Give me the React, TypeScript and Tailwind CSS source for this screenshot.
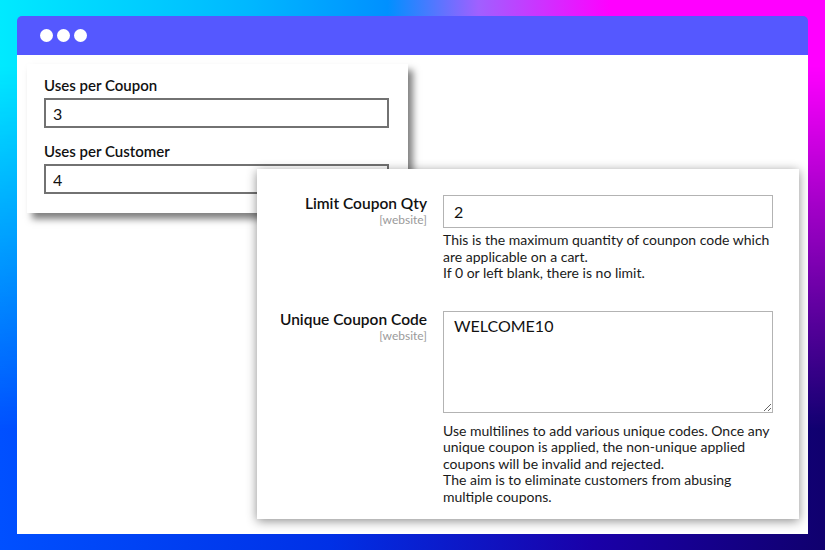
import React from 'react'

const font = { fontFamily: 'Lato, "Noto Sans", sans-serif' }

const WindowDots = (): JSX.Element => (
  <div className="flex items-center gap-[4px] pl-[23px]">
    <span className="block h-[13px] w-[13px] rounded-full bg-white" />
    <span className="block h-[13px] w-[13px] rounded-full bg-white" />
    <span className="block h-[13px] w-[13px] rounded-full bg-white" />
  </div>
)

const UsesCard = (): JSX.Element => (
  <div className="relative z-0 h-[149px] w-[381px] bg-white px-[17px] pt-[11px] shadow-[5px_6px_7px_rgba(0,0,0,0.5)]">
    <label className="block text-[15px] font-semibold leading-[20px] text-[#111]">Uses per Coupon</label>
    <input
      readOnly
      value="3"
      className="mt-[3px] block h-[30px] w-[345px] border-2 border-[#727272] px-[7px] text-[16px] text-[#111] outline-none"
      style={font}
    />
    <label className="mt-[13px] block text-[15px] font-semibold leading-[20px] text-[#111]">Uses per Customer</label>
    <input
      readOnly
      value="4"
      className="mt-[3px] block h-[30px] w-[345px] border-2 border-[#727272] px-[7px] text-[16px] text-[#111] outline-none"
      style={font}
    />
  </div>
)

const FieldLabel = ({ title }: { title: string }): JSX.Element => (
  <div className="text-right">
    <div className="text-[15.5px] font-semibold leading-[20px] text-[#111]">{title}</div>
    <div className="text-[12px] leading-[13px] text-[#9a9a9a]">[website]</div>
  </div>
)

const HelpText = ({ lines, className }: { lines: string[]; className: string }): JSX.Element => (
  <div className={`text-[14px] leading-[16.5px] text-[#1a1a1a] ${className}`}>
    {lines.map((l) => (
      <div key={l} className="whitespace-nowrap">
        {l}
      </div>
    ))}
  </div>
)

const CouponCard = (): JSX.Element => (
  <div className="relative z-10 -mt-[44px] ml-[230px] h-[350px] w-[542px] bg-white pt-[24px] shadow-[0_2px_10px_rgba(0,0,0,0.45)]">
    {/* Limit coupon qty */}
    <div className="grid grid-cols-[170px_330px] gap-x-[16px]">
      <FieldLabel title="Limit Coupon Qty" />
      <div>
        <input
          readOnly
          value="2"
          className="mt-[2px] block h-[33px] w-[330px] border border-[#b3b3b3] px-[10px] text-[16px] text-[#111] outline-none"
          style={font}
        />
        <HelpText
          className="mt-[4px]"
          lines={['This is the maximum quantity of counpon code which', 'are applicable on a cart.', 'If 0 or left blank, there is no limit.']}
        />
      </div>
    </div>

    {/* Unique coupon code */}
    <div className="mt-[27px] grid grid-cols-[170px_330px] gap-x-[16px]">
      <FieldLabel title="Unique Coupon Code" />
      <div>
        <textarea
          readOnly
          defaultValue="WELCOME10"
          className="mt-[2px] block h-[102px] w-[330px] border border-[#b3b3b3] px-[10px] pt-[4px] text-[16px] leading-[20px] text-[#111] outline-none"
          style={font}
        />
        <HelpText
          className="mt-[10px]"
          lines={[
            'Use multilines to add various unique codes. Once any',
            'unique coupon is applied, the non-unique applied',
            'coupons will be invalid and rejected.',
            'The aim is to eliminate customers from abusing',
            'multiple coupons.',
          ]}
        />
      </div>
    </div>
  </div>
)

export default function App(): JSX.Element {
  return (
    <div className="relative h-[550px] w-[825px] overflow-hidden" style={font}>
      {/* gradient backdrop */}
      <div className="absolute inset-0 bg-[linear-gradient(90deg,#00eaff_0%,#00b8ff_30%,#0090ff_47%,#a060ff_58%,#ff00ff_74%,#ff00ff_100%)]" />
      <div className="absolute inset-0 bg-[linear-gradient(90deg,#0050ff_0%,#0030e6_40%,#1a00a8_72%,#10006e_100%)] [mask-image:linear-gradient(to_bottom,transparent_12%,black_78%)]" />

      {/* browser window */}
      <div className="relative px-[17px] pt-[16px]">
        <div className="flex h-[518px] w-[791px] flex-col">
          <div className="flex h-[39px] items-center rounded-t-[5px] bg-[#5558ff]">
            <WindowDots />
          </div>
          <div className="flex-1 bg-white pl-[10px] pt-[9px]">
            <UsesCard />
            <CouponCard />
          </div>
        </div>
      </div>
    </div>
  )
}
